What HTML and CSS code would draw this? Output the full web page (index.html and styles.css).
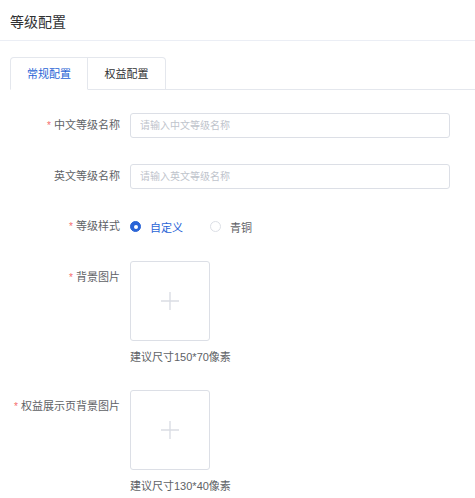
FILE: index.html
```html
<!DOCTYPE html>
<html lang="zh-CN">
<head>
<meta charset="utf-8">
<title>等级配置</title>
<link rel="stylesheet" href="styles.css">
</head>
<body>
<div class="page">
  <div class="header">等级配置</div>
  <div class="tabs">
    <div class="tab active">常规配置</div>
    <div class="tab">权益配置</div>
    <div class="tab-fill"></div>
  </div>
  <form class="form">
    <div class="item item-input">
      <label class="label"><span class="req">*</span>中文等级名称</label>
      <div class="content"><input class="input" placeholder="请输入中文等级名称"></div>
    </div>
    <div class="item item-input">
      <label class="label">英文等级名称</label>
      <div class="content"><input class="input" placeholder="请输入英文等级名称"></div>
    </div>
    <div class="item item-radio">
      <label class="label"><span class="req">*</span>等级样式</label>
      <div class="content radios">
        <span class="radio checked"><span class="dot"></span><span class="rtext">自定义</span></span>
        <span class="radio"><span class="dot"></span><span class="rtext">青铜</span></span>
      </div>
    </div>
    <div class="item item-upload">
      <label class="label label-tall"><span class="req">*</span>背景图片</label>
      <div class="content">
        <div class="upload">
          <svg width="18" height="18" viewBox="0 0 18 18"><path d="M9 0V18M0 9H18" stroke="#dadde4" stroke-width="1.4" fill="none"/></svg>
        </div>
        <div class="tip">建议尺寸150*70像素</div>
      </div>
    </div>
    <div class="item item-upload last">
      <label class="label label-tall"><span class="req">*</span>权益展示页背景图片</label>
      <div class="content">
        <div class="upload">
          <svg width="18" height="18" viewBox="0 0 18 18"><path d="M9 0V18M0 9H18" stroke="#dadde4" stroke-width="1.4" fill="none"/></svg>
        </div>
        <div class="tip">建议尺寸130*40像素</div>
      </div>
    </div>
  </form>
</div>
</body>
</html>
```
FILE: styles.css
```css
* { box-sizing: border-box; }
html, body { margin: 0; padding: 0; background: #fff; }
body {
  font-family: "Liberation Sans", "Noto Sans CJK SC", sans-serif;
  color: #606266;
  font-size: 11px;
}
.page { width: 475px; }
.header {
  height: 41px;
  padding: 12px 0 0 10px;
  font-size: 14px;
  line-height: 20px;
  color: #303133;
  border-bottom: 1px solid #ebeef5;
}
.tabs {
  display: flex;
  margin-top: 16px;
  padding-left: 10px;
  height: 33px;
}
.tab {
  width: 78px;
  height: 33px;
  border: 1px solid #e4e7ed;
  border-left: none;
  line-height: 32px;
  text-align: center;
  font-size: 11px;
  color: #303133;
}
.tab:first-child { border-left: 1px solid #e4e7ed; border-radius: 4px 0 0 0; }
.tab:nth-child(2) { border-radius: 0 4px 0 0; }
.tab.active { color: #2a64d6; border-bottom-color: #fff; }
.tab-fill { flex: 1; border-bottom: 1px solid #e4e7ed; }
.form { padding-top: 23px; }
.item { display: flex; }
.label {
  width: 130px;
  padding-right: 10px;
  text-align: right;
  line-height: 25px;
  color: #606266;
  flex-shrink: 0;
}
.req { color: #f56c6c; margin-right: 3px; font-size: 10px; }
.content { flex: 1; }
.item-input { margin-bottom: 26px; }
.item-input + .item-input { margin-bottom: 25px; }
.input {
  display: block;
  width: 320px;
  height: 25px;
  border: 1px solid #dcdfe6;
  border-radius: 3px;
  padding: 0 9px;
  font-family: inherit;
  font-size: 10px;
  color: #606266;
  outline: none;
}
.input::placeholder { color: #c0c4cc; }
.item-radio { margin-bottom: 22px; }
.radios { display: flex; align-items: center; height: 25px; }
.radio { display: flex; align-items: center; margin-right: 27px; color: #606266; }
.dot {
  width: 11px; height: 11px;
  border: 1px solid #dcdfe6;
  border-radius: 50%;
  background: #fff;
  margin-right: 9px;
  position: relative;
}
.radio.checked .dot { background: #2a64d6; border-color: #2a64d6; }
.radio.checked .dot::after {
  content: "";
  position: absolute;
  left: 50%; top: 50%;
  width: 4px; height: 4px;
  margin: -2px 0 0 -2px;
  border-radius: 50%;
  background: #fff;
}
.radio.checked .rtext { color: #2a64d6; }
.item-upload { margin-bottom: 23px; }
.label-tall { line-height: 33px; }
.upload {
  width: 80px; height: 80px;
  border: 1px solid #dcdfe6;
  border-radius: 3px;
  display: flex; align-items: center; justify-content: center;
}
.tip { margin-top: 6px; line-height: 20px; color: #606266; }
```
